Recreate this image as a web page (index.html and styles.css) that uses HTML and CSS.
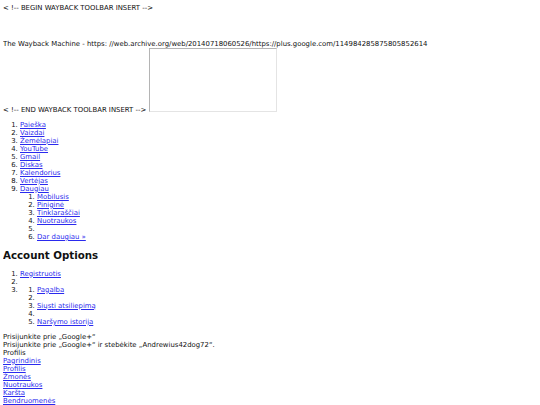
FILE: index.html
```html
<!DOCTYPE html>
<html lang="lt">
<head>
<meta charset="utf-8">
<title>Google+</title>
<link rel="stylesheet" href="styles.css">
</head>
<body>
<div class="wb-begin">&lt; !-- BEGIN WAYBACK TOOLBAR INSERT --&gt;</div>
<div class="wb-title">The Wayback Machine - https: //web.archive.org/web/20140718060526/https://plus.google.com/114984285875805852614</div>
<div class="wb-end">&lt; !-- END WAYBACK TOOLBAR INSERT --&gt;<span class="frame"></span></div>
<ol class="list">
  <li><a href="#">Paieška</a></li>
  <li><a href="#">Vaizdai</a></li>
  <li><a href="#">Žemėlapiai</a></li>
  <li><a href="#">YouTube</a></li>
  <li><a href="#">Gmail</a></li>
  <li><a href="#">Diskas</a></li>
  <li><a href="#">Kalendorius</a></li>
  <li><a href="#">Vertėjas</a></li>
  <li><a href="#">Daugiau</a>
    <ol class="sub">
      <li><a href="#">Mobilusis</a></li>
      <li><a href="#">Piniginė</a></li>
      <li><a href="#">Tinklaraščiai</a></li>
      <li><a href="#">Nuotraukos</a></li>
      <li></li>
      <li><a href="#">Dar daugiau »</a></li>
    </ol>
  </li>
</ol>
<h2 class="heading">Account Options</h2>
<ol class="list">
  <li><a href="#">Registruotis</a></li>
  <li></li>
  <li>
    <ol class="sub">
      <li><a href="#">Pagalba</a></li>
      <li></li>
      <li><a href="#">Siųsti atsiliepimą</a></li>
      <li></li>
      <li><a href="#">Naršymo istorija</a></li>
    </ol>
  </li>
</ol>
<div class="info">Prisijunkite prie „Google+“</div>
<div class="info">Prisijunkite prie „Google+“ ir stebėkite „Andrewius42dog72“.</div>
<div class="info">Profilis</div>
<nav class="links">
  <a href="#">Pagrindinis</a>
  <a href="#">Profilis</a>
  <a href="#">Žmonės</a>
  <a href="#">Nuotraukos</a>
  <a href="#">Karšta</a>
  <a href="#">Bendruomenės</a>
</nav>
</body>
</html>
```
FILE: styles.css
```css
html, body {
  background: #ffffff;
}
body {
  margin: 3px;
  font-family: "DejaVu Sans", Verdana, sans-serif;
  font-size: 6.9px;
  line-height: 8px;
  color: #111111;
}
a {
  color: #2a2aee;
  text-decoration: underline;
}
.wb-begin {
  margin-top: 1px;
}
.wb-title {
  margin-top: 28px;
}
.frame {
  display: inline-block;
  width: 126px;
  height: 62px;
  margin-left: 3px;
  border: 1px solid;
  border-color: #b4b4b4 #e4e4e4 #e4e4e4 #b4b4b4;
  vertical-align: baseline;
}
.list {
  margin: 6.8px 0;
  padding-left: 17px;
}
.sub {
  margin: 0;
  padding-left: 17px;
}
.heading {
  font-size: 10.25px;
  line-height: 12px;
  font-weight: bold;
  margin: 8.5px 0;
}
.links {
  display: flex;
  flex-direction: column;
  align-items: flex-start;
}
```
